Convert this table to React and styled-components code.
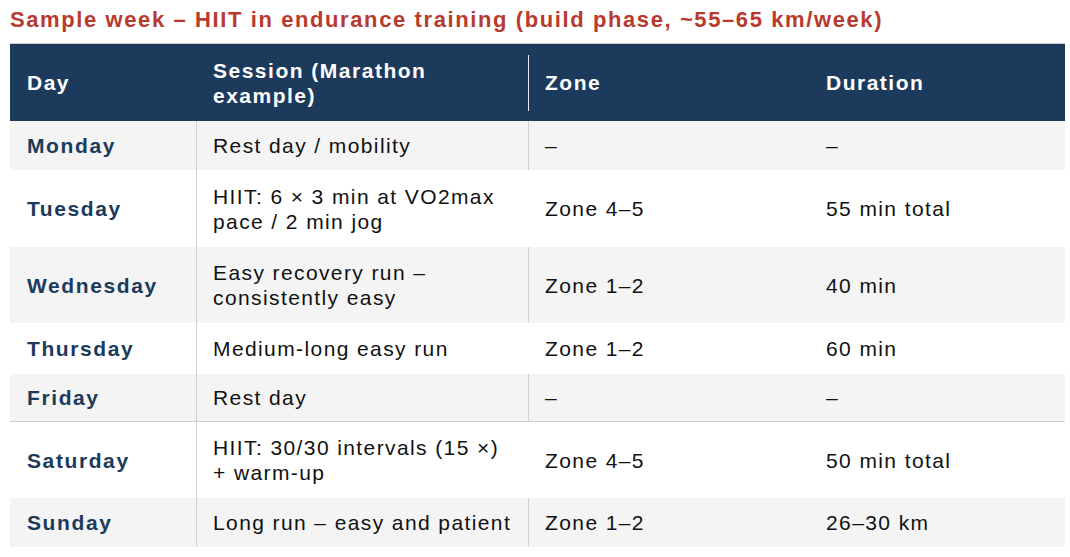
import React from 'react'
import styled, { createGlobalStyle } from 'styled-components'

const navy = '#1c3a5c'
const red = '#b83a2e'
const stripe = '#f4f4f4'
const line = '#d0d0d0'

const Global = createGlobalStyle`
	body {
		margin: 0;
		background: #ffffff;
		font-family: 'Liberation Sans', Arial, sans-serif;
	}
`

const Page = styled.div`
	padding: 6px 5px 0 10px;
	width: 1055px;
`

const Title = styled.h1`
	margin: 0 0 9px 0;
	font-size: 22px;
	line-height: 28px;
	font-weight: 700;
	letter-spacing: 1.6px;
	color: ${red};
	white-space: nowrap;
`

const Table = styled.div`
	display: grid;
	grid-template-columns: 187px 332px 281px 255px;
	border-top: 1px solid ${line};
	border-right: 1px solid ${line};
`

const Row = styled.div`
	display: contents;
`

const Cell = styled.div`
	display: flex;
	align-items: center;
	height: ${p => p.$h}px;
	padding: 0 8px 0 16px;
	box-sizing: border-box;
	font-size: 21px;
	line-height: 25px;
	letter-spacing: 1.4px;
	white-space: nowrap;
	color: #111;
	background: ${p => (p.$alt ? stripe : '#ffffff')};
	border-right: ${p => (p.$divider ? `1px solid ${line}` : 'none')};
	border-bottom: ${p => (p.$rule ? `1px solid ${line}` : 'none')};
`

const DayCell = styled(Cell)`
	padding-left: 17px;
	font-weight: 700;
	letter-spacing: 1.6px;
	color: ${navy};
	border-right: 1px solid ${line};
`

const HeadCell = styled(Cell)`
	background: ${navy};
	color: #ffffff;
	font-weight: 700;
	letter-spacing: 1.5px;
	position: relative;
	&::after {
		content: '';
		display: ${p => (p.$sep ? 'block' : 'none')};
		position: absolute;
		right: 0;
		top: 11px;
		bottom: 10px;
		width: 1px;
		background: #e8ecf2;
	}
`

const rows = [
	{ day: 'Monday', session: 'Rest day / mobility', zone: '–', dur: '–', h: 49 },
	{ day: 'Tuesday', session: <>HIIT: 6 × 3 min at VO2max<br />pace / 2 min jog</>, zone: 'Zone 4–5', dur: '55 min total', h: 77 },
	{ day: 'Wednesday', session: <>Easy recovery run –<br />consistently easy</>, zone: 'Zone 1–2', dur: '40 min', h: 76 },
	{ day: 'Thursday', session: 'Medium-long easy run', zone: 'Zone 1–2', dur: '60 min', h: 51 },
	{ day: 'Friday', session: 'Rest day', zone: '–', dur: '–', h: 48, rule: true },
	{ day: 'Saturday', session: <>HIIT: 30/30 intervals (15 ×)<br />+ warm-up</>, zone: 'Zone 4–5', dur: '50 min total', h: 76 },
	{ day: 'Sunday', session: 'Long run – easy and patient', zone: 'Zone 1–2', dur: '26–30 km', h: 49 },
]

export default function App() {
	return (
		<>
			<Global />
			<Page>
				<Title>Sample week – HIIT in endurance training (build phase, ~55–65 km/week)</Title>
				<Table>
					<Row>
						<HeadCell $h={77} style={{ paddingLeft: 17 }}>Day</HeadCell>
						<HeadCell $h={77} $sep>Session (Marathon<br />example)</HeadCell>
						<HeadCell $h={77}>Zone</HeadCell>
						<HeadCell $h={77}>Duration</HeadCell>
					</Row>
					{rows.map((r, i) => {
						const alt = i % 2 === 0
						return (
							<Row key={r.day}>
								<DayCell $h={r.h} $alt={alt} $rule={r.rule}>{r.day}</DayCell>
								<Cell $h={r.h} $alt={alt} $rule={r.rule} $divider={alt}>{r.session}</Cell>
								<Cell $h={r.h} $alt={alt} $rule={r.rule}>{r.zone}</Cell>
								<Cell $h={r.h} $alt={alt} $rule={r.rule}>{r.dur}</Cell>
							</Row>
						)
					})}
				</Table>
			</Page>
		</>
	)
}
